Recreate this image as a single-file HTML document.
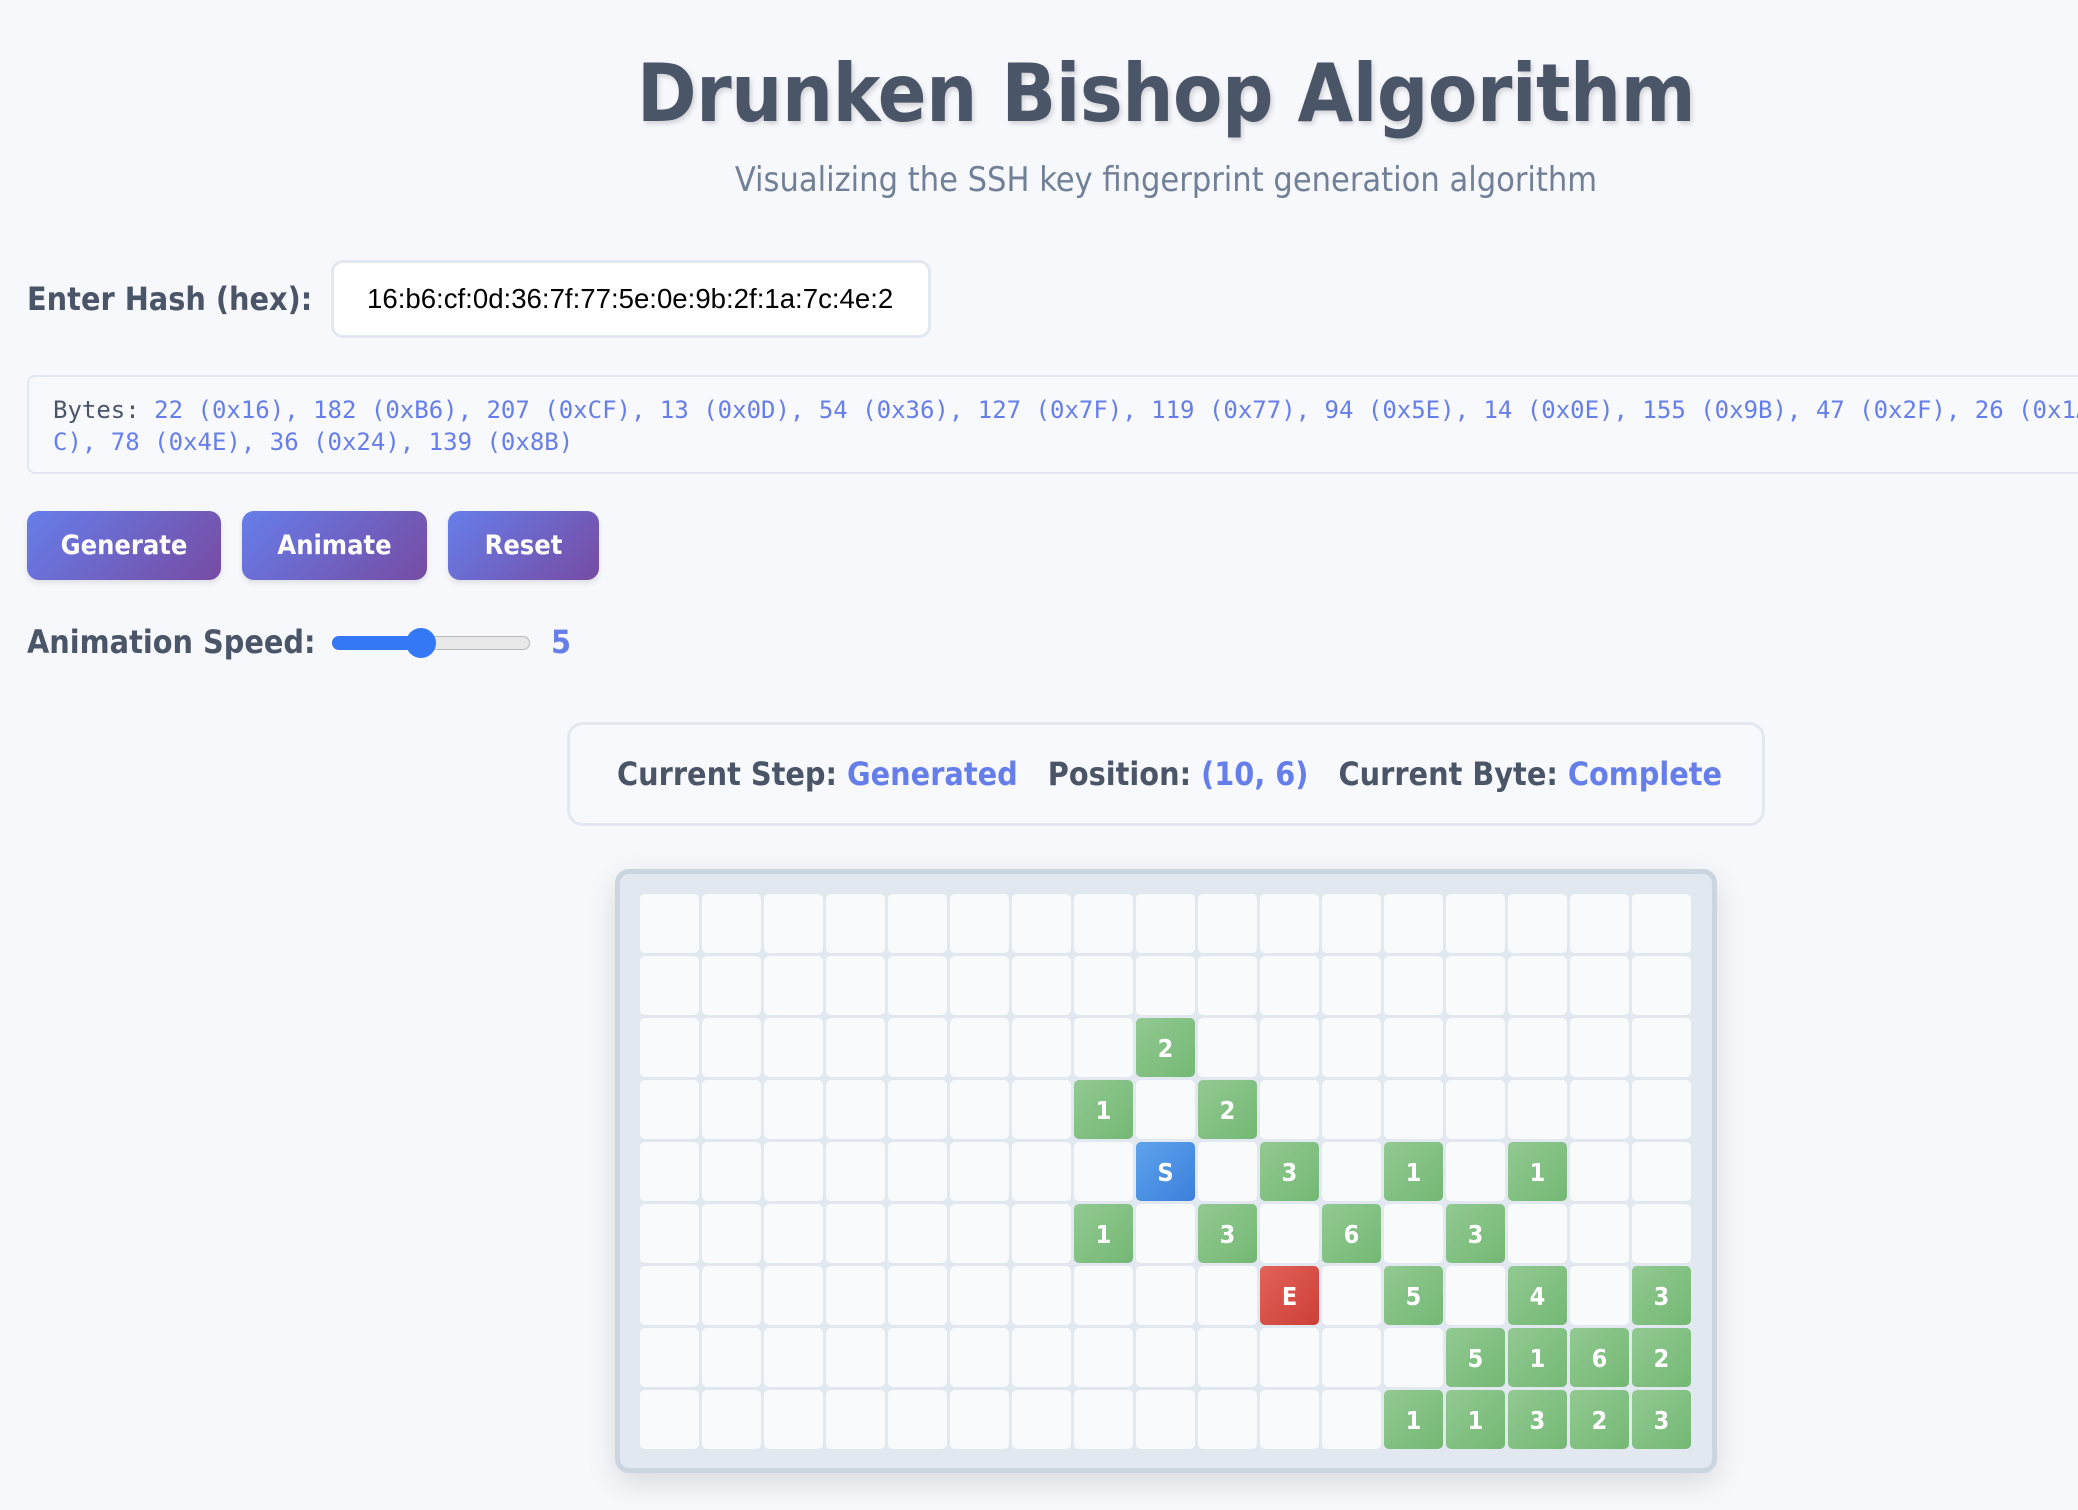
<!DOCTYPE html>
<html><head><meta charset="utf-8"><style>
*{box-sizing:border-box;margin:0;padding:0}
body{width:2078px;height:1510px;background:#f7f8fc;position:relative;overflow:hidden;font-family:"DejaVu Sans Condensed","DejaVu Sans","Liberation Sans",sans-serif;color:#4a5568}
.abs{position:absolute}
h1{position:absolute;left:0;width:2332px;text-align:center;top:44px;font-size:80px;font-weight:bold;color:#4a5568;text-shadow:2px 3px 5px rgba(0,0,0,.15);letter-spacing:-0.5px;line-height:100px}
.sub{position:absolute;left:0;width:2332px;text-align:center;top:157px;font-size:34px;color:#718096;line-height:46px}
.lbl{font-weight:bold;font-size:32px;color:#4a5568}
.inp{left:331px;top:260px;width:600px;height:78px;background:#fff;border:3px solid #e2e8f0;border-radius:12px;font-family:"Liberation Sans",sans-serif;font-size:27.6px;color:#000;padding-left:33px;line-height:72px}
.bytes{left:27px;top:375px;width:2060px;height:99px;background:#f8f9fc;border:2px solid #e2e8f0;border-right:none;border-radius:8px 0 0 8px;font-family:"DejaVu Sans Mono","Liberation Mono",monospace;font-size:24px;line-height:32px;padding:17px 0 0 24px;white-space:pre;color:#667eea;overflow:hidden}
.bytes b{font-weight:normal;color:#4a5568}
.btn{top:511px;height:69px;border-radius:12px;background:linear-gradient(135deg,#667eea,#764ba2);color:#fff;font-weight:bold;font-size:27px;text-align:center;line-height:69px;box-shadow:0 3px 6px rgba(0,0,0,.1)}
.status{left:567px;top:722px;width:1198px;height:104px;border:3px solid #e2e8f0;border-radius:16px;background:#f8f9fc;font-size:32px;font-weight:bold;line-height:98px;padding-left:47px;white-space:pre}
.status span{color:#667eea}
.grid{left:615px;top:869px;width:1102px;height:604px;background:#e2e8f0;border:5px solid #cbd5e0;border-radius:14px;box-shadow:0 10px 30px rgba(0,0,0,.12);padding:20px 0 0 20px;display:grid;grid-template-columns:repeat(17,59px);grid-template-rows:repeat(9,59px);gap:3px}
.grid div{background:#f8fafc;border-radius:5px;color:#fff;font-weight:bold;font-size:25px;text-align:center;line-height:61px}
.grid .g{background:linear-gradient(135deg,#92c992,#74b874)}
.grid .s{background:linear-gradient(135deg,#5fa3ec,#3b7fdc)}
.grid .e{background:linear-gradient(135deg,#e2625a,#cc3f36)}
</style></head><body>
<h1>Drunken Bishop Algorithm</h1>
<div class="sub">Visualizing the SSH key fingerprint generation algorithm</div>
<div class="abs lbl" style="left:27px;top:280px">Enter Hash (hex):</div>
<div class="abs inp">16:b6:cf:0d:36:7f:77:5e:0e:9b:2f:1a:7c:4e:2</div>
<div class="abs bytes"><b>Bytes:</b> 22 (0x16), 182 (0xB6), 207 (0xCF), 13 (0x0D), 54 (0x36), 127 (0x7F), 119 (0x77), 94 (0x5E), 14 (0x0E), 155 (0x9B), 47 (0x2F), 26 (0x1A), 124 (0x7
C), 78 (0x4E), 36 (0x24), 139 (0x8B)</div>
<div class="abs btn" style="left:27px;width:194px">Generate</div>
<div class="abs btn" style="left:242px;width:185px">Animate</div>
<div class="abs btn" style="left:448px;width:151px">Reset</div>
<div class="abs lbl" style="left:27px;top:623px">Animation Speed:</div>
<div class="abs" style="left:332px;top:636px;width:198px;height:14px;border-radius:7px;background:#e8e8e8;border:1px solid #b8b8b8"></div>
<div class="abs" style="left:332px;top:636px;width:92px;height:14px;border-radius:7px;background:#3478f6"></div>
<div class="abs" style="left:406px;top:628px;width:30px;height:30px;border-radius:50%;background:#3478f6"></div>
<div class="abs lbl" style="left:551px;top:623px;color:#667eea">5</div>
<div class="abs status">Current Step: <span>Generated</span>   Position: <span>(10, 6)</span>   Current Byte: <span>Complete</span></div>
<div class="abs grid">
<div></div><div></div><div></div><div></div><div></div><div></div><div></div><div></div><div></div><div></div><div></div><div></div><div></div><div></div><div></div><div></div><div></div>
<div></div><div></div><div></div><div></div><div></div><div></div><div></div><div></div><div></div><div></div><div></div><div></div><div></div><div></div><div></div><div></div><div></div>
<div></div><div></div><div></div><div></div><div></div><div></div><div></div><div></div><div class="g">2</div><div></div><div></div><div></div><div></div><div></div><div></div><div></div><div></div>
<div></div><div></div><div></div><div></div><div></div><div></div><div></div><div class="g">1</div><div></div><div class="g">2</div><div></div><div></div><div></div><div></div><div></div><div></div><div></div>
<div></div><div></div><div></div><div></div><div></div><div></div><div></div><div></div><div class="s">S</div><div></div><div class="g">3</div><div></div><div class="g">1</div><div></div><div class="g">1</div><div></div><div></div>
<div></div><div></div><div></div><div></div><div></div><div></div><div></div><div class="g">1</div><div></div><div class="g">3</div><div></div><div class="g">6</div><div></div><div class="g">3</div><div></div><div></div><div></div>
<div></div><div></div><div></div><div></div><div></div><div></div><div></div><div></div><div></div><div></div><div class="e">E</div><div></div><div class="g">5</div><div></div><div class="g">4</div><div></div><div class="g">3</div>
<div></div><div></div><div></div><div></div><div></div><div></div><div></div><div></div><div></div><div></div><div></div><div></div><div></div><div class="g">5</div><div class="g">1</div><div class="g">6</div><div class="g">2</div>
<div></div><div></div><div></div><div></div><div></div><div></div><div></div><div></div><div></div><div></div><div></div><div></div><div class="g">1</div><div class="g">1</div><div class="g">3</div><div class="g">2</div><div class="g">3</div>
</div>
</body></html>
